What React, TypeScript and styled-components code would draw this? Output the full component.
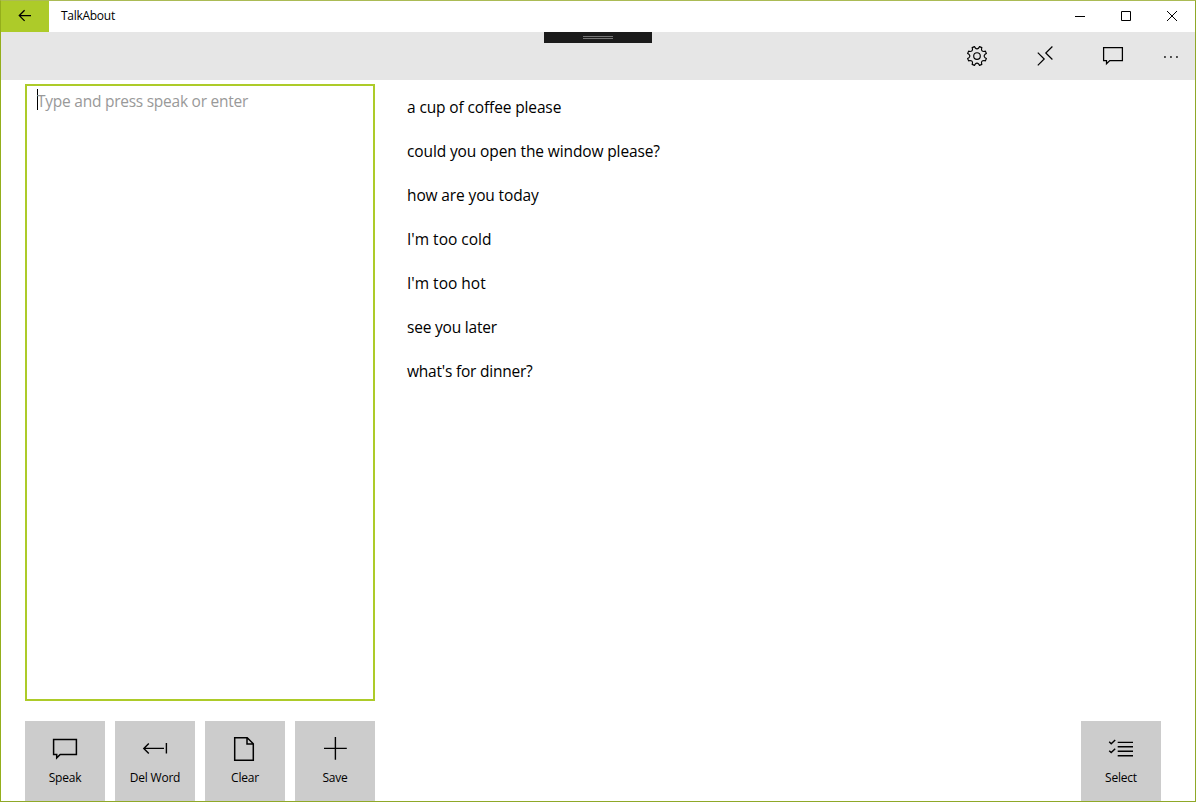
import React from "react";
import styled, { createGlobalStyle } from "styled-components";

const GlobalStyle = createGlobalStyle`
  * { box-sizing: border-box; }
  html, body { margin: 0; padding: 0; overflow: hidden; background: #fff; }
`;

const Window = styled.div`
  width: 1196px;
  height: 802px;
  display: flex;
  flex-direction: column;
  border: 1px solid;
  border-color: #abbb55 #8fa828 #8fa828 #94ae1b;
  background: #fff;
  color: #000;
  font-family: "Open Sans", "Noto Sans", sans-serif;
`;

const TitleBar = styled.header`
  flex: none;
  height: 31px;
  display: flex;
  align-items: stretch;
`;

const BareButton = styled.button`
  padding: 0;
  border: 0;
  background: transparent;
  color: inherit;
  font-family: inherit;
  display: flex;
  align-items: center;
  justify-content: center;
`;

const BackButton = styled(BareButton)`
  width: 48px;
  background: #adcb29;
`;

const Title = styled.div`
  flex: 1;
  padding-left: 12px;
  font-size: 12px;
  line-height: 30px;
  letter-spacing: -0.28px;
`;

const CaptionButton = styled(BareButton)`
  width: 46px;
`;

const CommandBar = styled.nav`
  position: relative;
  flex: none;
  height: 48px;
  display: flex;
  justify-content: flex-end;
  background: #e6e6e6;
`;

const DrawerHandle = styled.div`
  position: absolute;
  top: 0;
  left: 543px;
  width: 108px;
  height: 11px;
  display: flex;
  justify-content: center;
  padding-top: 4px;
  background: #1b1b1b;
`;

const Grip = styled.div`
  width: 30px;
  height: 3px;
  border: solid #767676;
  border-width: 1px 0;
`;

const CommandButton = styled(BareButton)<{ $width?: number }>`
  width: ${(p) => p.$width ?? 68}px;
`;

const Content = styled.main`
  flex: 1;
  min-height: 0;
  display: flex;
  padding: 4px 0 0 24px;
`;

const Composer = styled.section`
  width: 350px;
  display: flex;
  flex-direction: column;
  gap: 20px;
`;

const TextBox = styled.div`
  height: 617px;
  display: flex;
  align-items: flex-start;
  padding: 3px 10px;
  border: 2px solid #adcb29;
`;

const Caret = styled.span`
  width: 1px;
  height: 21px;
  margin-right: -1px;
  background: #000;
`;

const Placeholder = styled.span`
  color: #999;
  font-size: 15.5px;
  line-height: 24px;
  white-space: nowrap;
  letter-spacing: -0.25px;
`;

const ButtonRow = styled.div`
  display: flex;
  gap: 10px;
`;

const Tile = styled(BareButton)`
  width: 80px;
  height: 80px;
  flex-direction: column;
  justify-content: flex-start;
  padding-top: 12px;
  background: #ccc;
`;

const TileLabel = styled.span`
  margin-top: 5px;
  font-size: 12px;
  line-height: 16px;
  letter-spacing: -0.2px;
`;

const Phrases = styled.section`
  flex: 1;
  display: flex;
  flex-direction: column;
  justify-content: space-between;
  padding: 0 34px 0 32px;
`;

const PhraseList = styled.ul`
  margin: 0;
  padding: 1px 0 0;
  list-style: none;
`;

const Phrase = styled.li<{ $tracking: number }>`
  height: 44px;
  font-size: 15.5px;
  line-height: 44px;
  white-space: nowrap;
  letter-spacing: ${(p) => p.$tracking}px;
`;

const TileEnd = styled.div`
  display: flex;
  justify-content: flex-end;
`;

const Glyph = styled.svg`
  display: block;
  flex: none;
  overflow: visible;
  fill: none;
  stroke: #000;
`;

const phrases = [
  { text: "a cup of coffee please", tracking: -0.13 },
  { text: "could you open the window please?", tracking: -0.12 },
  { text: "how are you today", tracking: -0.13 },
  { text: "I'm too cold", tracking: 0 },
  { text: "I'm too hot", tracking: 0 },
  { text: "see you later", tracking: -0.2 },
  { text: "what's for dinner?", tracking: -0.22 },
];

/* Outline of an eight-toothed gear, with a rounded valley at each multiple of 45 degrees. */
function gearPath(c: number) {
  const at = (r: number, deg: number) => {
    const a = ((deg - 90) * Math.PI) / 180;
    return `${(c + r * Math.cos(a)).toFixed(2)} ${(c + r * Math.sin(a)).toFixed(2)}`;
  };
  let d = "";
  for (let k = 0; k < 8; k++) {
    const m = k * 45;
    d += `${k ? "L" : "M"}${at(9.7, m - 15)}L${at(8.2, m - 12)}Q${at(6.3, m)} ${at(8.2, m + 12)}L${at(9.7, m + 15)}`;
  }
  return d + "Z";
}

const BackIcon = () => (
  <Glyph width="14" height="13" strokeWidth="1.3">
    <path d="M1.6 5.6H13M6.6 0.3L1.3 5.6L6.6 10.9" />
  </Glyph>
);

const MinimizeIcon = () => (
  <Glyph width="12" height="11">
    <path d="M1 5.5H11" />
  </Glyph>
);

const MaximizeIcon = () => (
  <Glyph width="12" height="11">
    <path d="M1.5 0.5H10.5V9.5H1.5Z" />
  </Glyph>
);

const CloseIcon = () => (
  <Glyph width="12" height="11">
    <path d="M1 0L11 10M11 0L1 10" />
  </Glyph>
);

const GearIcon = () => (
  <Glyph width="20" height="20" strokeWidth="1.15">
    <path d={gearPath(10)} strokeLinejoin="round" />
    <circle cx="10" cy="10" r="3.3" />
  </Glyph>
);

const ConnectIcon = () => (
  <Glyph width="20" height="20" strokeWidth="1.2">
    <path d="M2.8 6.6L9.2 13L2.8 19.4M17.4 0.5L10.8 7L17.4 13.5" />
  </Glyph>
);

const CommentIcon = () => (
  <Glyph width="20" height="20" strokeWidth="1.25">
    <path d="M0.6 1.6H19.4V14.5H6.8L3.5 17.8V14.5H0.6Z" />
  </Glyph>
);

const MoreIcon = () => (
  <Glyph width="16" height="4">
    <path d="M1.1 3H2.8M7.1 3H8.8M13.1 3H14.8" strokeWidth="1.6" />
  </Glyph>
);

const SpeakIcon = () => (
  <Glyph width="32" height="32" strokeWidth="1.5">
    <path d="M4.6 6.6H27.4V21.4H11.2L7.7 24.9V21.4H4.6Z" />
  </Glyph>
);

const DeleteWordIcon = () => (
  <Glyph width="32" height="32" strokeWidth="1.4">
    <path d="M4.8 15.4H25M9.8 10.4L4.8 15.4L9.8 20.4M27.4 10V20.6" />
  </Glyph>
);

const PageIcon = () => (
  <Glyph width="32" height="32" strokeWidth="1.5">
    <path d="M5.7 4.7H18.2L24.3 10.8V27.3H5.7ZM18 4.8V11H24.2" />
  </Glyph>
);

const PlusIcon = () => (
  <Glyph width="32" height="32" strokeWidth="1.4">
    <path d="M16.4 4V26.8M5 15.4H27.8" />
  </Glyph>
);

const SelectIcon = () => (
  <Glyph width="32" height="32" strokeWidth="1.4">
    <path d="M12.7 9.4H28M12.7 13.8H28M12.7 18.3H28M12.7 22.7H28" />
    <path d="M4.2 8.8L6.2 10.7L10.2 6.9M4.2 17.7L6.2 19.6L10.2 15.8" />
  </Glyph>
);

const actions = [
  { label: "Speak", icon: <SpeakIcon /> },
  { label: "Del Word", icon: <DeleteWordIcon /> },
  { label: "Clear", icon: <PageIcon /> },
  { label: "Save", icon: <PlusIcon /> },
];

export default function App() {
  return (
    <>
      <GlobalStyle />
      <Window>
        <TitleBar>
          <BackButton aria-label="Back"><BackIcon /></BackButton>
          <Title>TalkAbout</Title>
          <CaptionButton aria-label="Minimize"><MinimizeIcon /></CaptionButton>
          <CaptionButton aria-label="Maximize"><MaximizeIcon /></CaptionButton>
          <CaptionButton aria-label="Close"><CloseIcon /></CaptionButton>
        </TitleBar>
        <CommandBar>
          <DrawerHandle><Grip /></DrawerHandle>
          <CommandButton aria-label="Settings"><GearIcon /></CommandButton>
          <CommandButton aria-label="Connect"><ConnectIcon /></CommandButton>
          <CommandButton aria-label="Comment"><CommentIcon /></CommandButton>
          <CommandButton aria-label="More" $width={48}><MoreIcon /></CommandButton>
        </CommandBar>
        <Content>
          <Composer>
            <TextBox>
              <Caret />
              <Placeholder>Type and press speak or enter</Placeholder>
            </TextBox>
            <ButtonRow>
              {actions.map((a) => (
                <Tile key={a.label}>
                  {a.icon}
                  <TileLabel>{a.label}</TileLabel>
                </Tile>
              ))}
            </ButtonRow>
          </Composer>
          <Phrases>
            <PhraseList>
              {phrases.map((p) => (
                <Phrase key={p.text} $tracking={p.tracking}>{p.text}</Phrase>
              ))}
            </PhraseList>
            <TileEnd>
              <Tile>
                <SelectIcon />
                <TileLabel>Select</TileLabel>
              </Tile>
            </TileEnd>
          </Phrases>
        </Content>
      </Window>
    </>
  );
}
